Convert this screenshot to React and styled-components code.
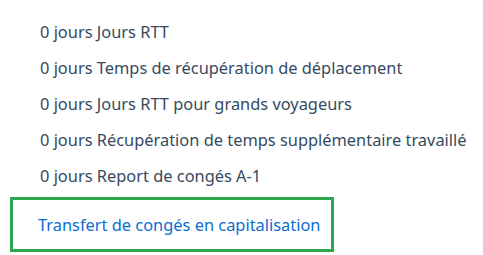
import React from "react";
import styled, { createGlobalStyle } from "styled-components";

const Global = createGlobalStyle`
  html, body { margin: 0; padding: 0; background: #ffffff; }
  body { font-family: "Noto Sans", "Open Sans", Arial, sans-serif; }
`;

const Page = styled.div`
  width: 483px;
  height: 255px;
  box-sizing: border-box;
  padding: 14px 0 0 10px;
  display: flex;
  flex-direction: column;
`;

const List = styled.ul`
  list-style: none;
  margin: 0;
  padding: 0 0 0 30px;
  display: flex;
  flex-direction: column;
`;

const Row = styled.li`
  height: 36px;
  line-height: 36px;
  font-size: 16.4px;
  color: #354a5f;
  white-space: nowrap;
`;

const Highlight = styled.div`
  margin-top: 3px;
  width: 324px;
  height: 55px;
  box-sizing: border-box;
  border: 3.5px solid #2da84a;
  display: flex;
  align-items: center;
  padding-left: 25px;
`;

const Link = styled.a`
  font-size: 16.4px;
  color: #0a6ed1;
  text-decoration: none;
  cursor: pointer;
  white-space: nowrap;
`;

const rows = [
  "0 jours Jours RTT",
  "0 jours Temps de récupération de déplacement",
  "0 jours Jours RTT pour grands voyageurs",
  "0 jours Récupération de temps supplémentaire travaillé",
  "0 jours Report de congés A-1",
];

export default function App() {
  return (
    <>
      <Global />
      <Page>
        <List>
          {rows.map((r) => (
            <Row key={r}>{r}</Row>
          ))}
        </List>
        <Highlight>
          <Link>Transfert de congés en capitalisation</Link>
        </Highlight>
      </Page>
    </>
  );
}
